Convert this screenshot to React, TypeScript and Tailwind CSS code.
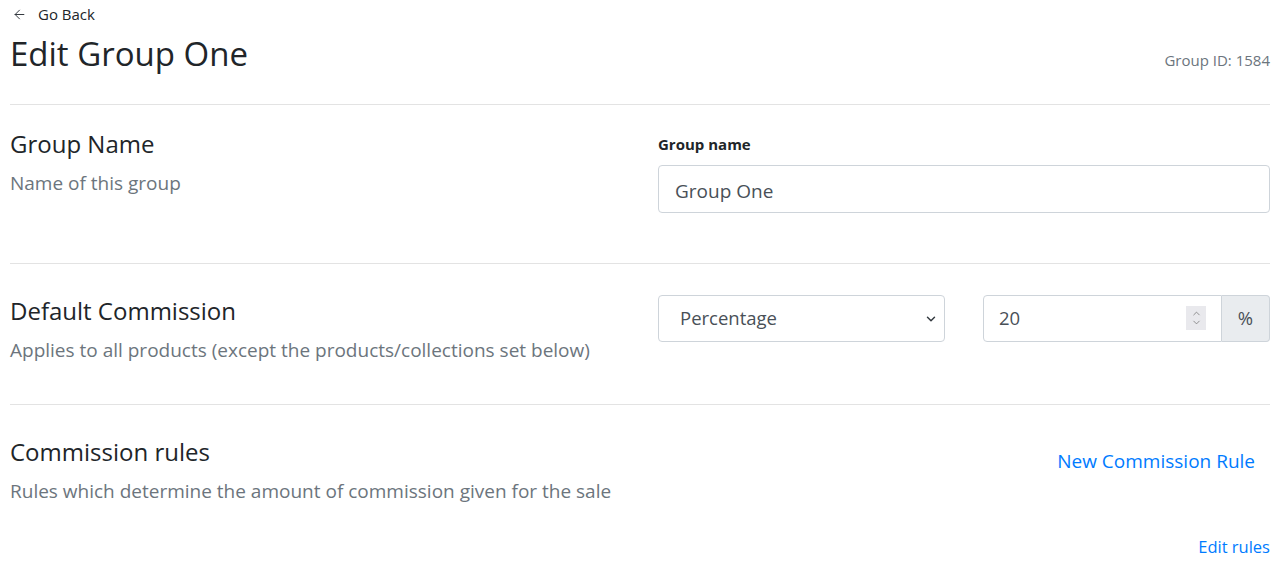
import { ArrowLeft, ChevronDown, ChevronUp } from "lucide-react"

function SectionText({ title, sub }: { title: string; sub: string }) {
  return (
    <div>
      <h4 className="text-[24px] leading-[1.2] text-[#212529]">{title}</h4>
      <p className="mt-[11px] text-[19px] leading-[1.5] text-[#6c757d]">{sub}</p>
    </div>
  )
}

export default function App() {
  return (
    <div className="min-h-screen bg-white pl-[10px] pr-[7px] font-['Open_Sans',sans-serif] text-[#212529]">
      {/* Back link */}
      <a href="#" className="flex h-[28px] items-center gap-[11px] text-[15px] text-[#212529]">
        <ArrowLeft size={15} strokeWidth={1.6} className="ml-[2px] text-[#343a40]" />
        <span>Go Back</span>
      </a>

      {/* Header */}
      <div className="flex items-center justify-between pb-[30px] pt-[6px]">
        <h1 className="text-[33px] leading-[1.2] text-[#212529]">Edit Group One</h1>
        <span className="mt-[12px] text-[15px] text-[#6c757d]">Group ID: 1584</span>
      </div>

      {/* Group name */}
      <section className="grid h-[159px] grid-cols-2 gap-[36px] border-t border-[#e3e3e3] pt-[25px]">
        <SectionText title="Group Name" sub="Name of this group" />
        <div className="pt-[3px]">
          <label className="block text-[15px] font-bold leading-[1.5] text-[#212529]">Group name</label>
          <input
            defaultValue="Group One"
            className="mt-[10px] h-[48px] w-full rounded-[4px] border border-[#ced4da] px-[16px] pt-[3px] text-[19px] text-[#495057] outline-none"
          />
        </div>
      </section>

      {/* Default commission */}
      <section className="grid h-[141px] grid-cols-2 gap-[36px] border-t border-[#e3e3e3] pt-[33px]">
        <SectionText title="Default Commission" sub="Applies to all products (except the products/collections set below)" />
        <div className="-mt-[2px] grid grid-cols-2 gap-[38px]">
          <div className="relative h-[47px] rounded-[4px] border border-[#ced4da]">
            <div className="flex h-full items-center pl-[21px] text-[18.5px] text-[#495057]">Percentage</div>
            <ChevronDown size={14} strokeWidth={2.5} className="absolute right-[6px] top-[16px] text-[#343a40]" />
          </div>
          <div className="flex h-[47px]">
            <div className="flex flex-1 items-center justify-between rounded-l-[4px] border border-[#ced4da] pl-[15px] pr-[15px] text-[18.5px] text-[#495057]">
              <span>20</span>
              <span className="flex h-[24px] w-[20px] flex-col items-center justify-center bg-[#e9e9ed] text-[#6f6f6f]">
                <ChevronUp size={11} strokeWidth={1.6} className="-mb-[1px]" />
                <ChevronDown size={11} strokeWidth={1.6} className="-mt-[1px]" />
              </span>
            </div>
            <div className="flex w-[48px] items-center justify-center rounded-r-[4px] border border-l-0 border-[#ced4da] bg-[#e9ecef] text-[18.5px] text-[#495057]">
              %
            </div>
          </div>
        </div>
      </section>

      {/* Commission rules */}
      <section className="border-t border-[#e3e3e3] pt-[33px]">
        <div className="flex items-start justify-between">
          <SectionText title="Commission rules" sub="Rules which determine the amount of commission given for the sale" />
          <a href="#" className="mr-[15px] mt-[9px] text-[19px] leading-[1.5] text-[#007bff]">New Commission Rule</a>
        </div>
        <div className="mt-[29px] flex justify-end">
          <a href="#" className="text-[16.5px] leading-[1.5] text-[#007bff]">Edit rules</a>
        </div>
      </section>
    </div>
  )
}
